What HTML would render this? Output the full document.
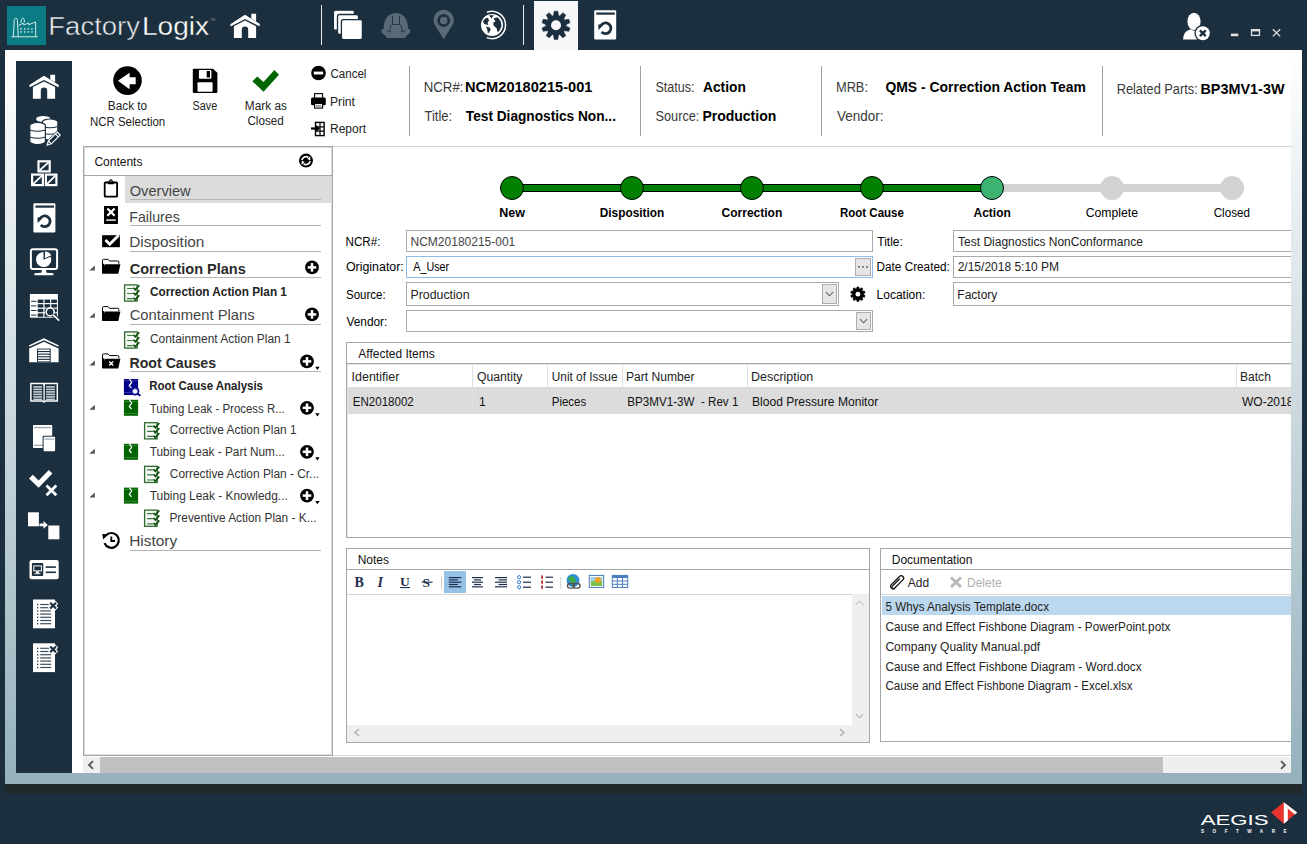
<!DOCTYPE html>
<html><head><meta charset="utf-8"><style>
html,body{margin:0;padding:0;width:1307px;height:844px;overflow:hidden;background:#1b2f3e;}
svg{display:block;font-family:"Liberation Sans", sans-serif;}
</style></head><body>
<svg width="1307" height="844" viewBox="0 0 1307 844">
<defs>
<linearGradient id="gwin" x1="0" y1="0" x2="0" y2="1"><stop offset="0" stop-color="#ffffff"/><stop offset="1" stop-color="#95b1bc"/></linearGradient>
<clipPath id="cmain"><rect x="333" y="147" width="958" height="608"/></clipPath>
<clipPath id="ctree"><rect x="84" y="176" width="248" height="578"/></clipPath>
</defs>
<rect x="0" y="0" width="1307" height="844" fill="#1b2f3e" />
<rect x="5" y="50" width="1297" height="734" fill="url(#gwin)" />
<rect x="5" y="784" width="1297" height="10" fill="#21292c" />
<rect x="72" y="50" width="1219" height="723" fill="#ffffff" />
<rect x="16" y="50" width="56" height="11" fill="#ffffff" />
<rect x="16" y="61" width="56" height="712" fill="#1b2f3e" />
<text x="48.30" y="35.20" font-size="25" fill="#eef0f2" textLength="91.67" lengthAdjust="spacingAndGlyphs" stroke="#1b2f3e" stroke-width="0.5">Factory</text>
<text x="141.95" y="35.20" font-size="25" fill="#ffffff" textLength="67.15" lengthAdjust="spacingAndGlyphs" stroke="#1b2f3e" stroke-width="0.3">Logix</text>
<text x="107.86" y="109.60" font-size="12" fill="#222" textLength="39.31" lengthAdjust="spacingAndGlyphs">Back to</text>
<text x="89.88" y="126.00" font-size="12" fill="#222" textLength="75.35" lengthAdjust="spacingAndGlyphs">NCR Selection</text>
<text x="192.51" y="109.60" font-size="12" fill="#222" textLength="24.71" lengthAdjust="spacingAndGlyphs">Save</text>
<text x="244.85" y="109.60" font-size="12" fill="#222" textLength="42.08" lengthAdjust="spacingAndGlyphs">Mark as</text>
<text x="247.42" y="125.40" font-size="12" fill="#222" textLength="36.32" lengthAdjust="spacingAndGlyphs">Closed</text>
<text x="330.42" y="78.00" font-size="12" fill="#222" textLength="36.01" lengthAdjust="spacingAndGlyphs">Cancel</text>
<text x="330.03" y="105.50" font-size="12" fill="#222" textLength="24.99" lengthAdjust="spacingAndGlyphs">Print</text>
<text x="330.04" y="133.00" font-size="12" fill="#222">Report</text>
<rect x="409" y="66" width="1" height="70" fill="#a0a0a0" />
<rect x="640" y="66" width="1" height="70" fill="#a0a0a0" />
<rect x="821" y="66" width="1" height="70" fill="#a0a0a0" />
<rect x="1102" y="66" width="1" height="70" fill="#a0a0a0" />
<text x="423.74" y="92.10" font-size="14" fill="#3a3a3a" textLength="39.69" lengthAdjust="spacingAndGlyphs">NCR#:</text>
<text x="465.05" y="92.10" font-size="14" fill="#000" font-weight="700" textLength="127.36" lengthAdjust="spacingAndGlyphs">NCM20180215-001</text>
<text x="424.54" y="120.60" font-size="14" fill="#3a3a3a" textLength="27.63" lengthAdjust="spacingAndGlyphs">Title:</text>
<text x="465.86" y="120.60" font-size="14" fill="#000" font-weight="700" textLength="150.07" lengthAdjust="spacingAndGlyphs">Test Diagnostics Non...</text>
<text x="655.44" y="91.80" font-size="14" fill="#3a3a3a" textLength="38.96" lengthAdjust="spacingAndGlyphs">Status:</text>
<text x="702.96" y="91.80" font-size="14" fill="#000" font-weight="700" textLength="42.88" lengthAdjust="spacingAndGlyphs">Action</text>
<text x="655.43" y="120.70" font-size="14" fill="#3a3a3a" textLength="43.98" lengthAdjust="spacingAndGlyphs">Source:</text>
<text x="702.39" y="120.70" font-size="14" fill="#000" font-weight="700">Production</text>
<text x="835.98" y="91.80" font-size="14" fill="#3a3a3a" textLength="31.98" lengthAdjust="spacingAndGlyphs">MRB:</text>
<text x="885.44" y="91.80" font-size="14" fill="#000" font-weight="700" textLength="200.40" lengthAdjust="spacingAndGlyphs">QMS - Correction Action Team</text>
<text x="837.00" y="120.70" font-size="14" fill="#3a3a3a" textLength="46.48" lengthAdjust="spacingAndGlyphs">Vendor:</text>
<text x="1116.68" y="93.60" font-size="14" fill="#3a3a3a" textLength="81.03" lengthAdjust="spacingAndGlyphs">Related Parts:</text>
<text x="1200.46" y="93.60" font-size="14" fill="#000" font-weight="700" textLength="84.03" lengthAdjust="spacingAndGlyphs">BP3MV1-3W</text>
<rect x="84" y="147" width="248" height="1" fill="#dcdcdc" />
<rect x="84" y="754" width="248" height="1" fill="#dcdcdc" />
<rect x="84" y="147" width="1" height="608" fill="#dcdcdc" />
<rect x="331" y="147" width="1" height="608" fill="#dcdcdc" />
<rect x="83" y="146" width="250" height="1" fill="#a6a6a6" />
<rect x="83" y="755" width="250" height="1" fill="#a6a6a6" />
<rect x="83" y="146" width="1" height="610" fill="#a6a6a6" />
<rect x="332" y="146" width="1" height="610" fill="#a6a6a6" />
<rect x="84" y="175" width="248" height="1" fill="#a6a6a6" />
<text x="94.40" y="165.80" font-size="12" fill="#111">Contents</text>
<rect x="125" y="176" width="207" height="27" fill="#dcdcdc" />
<text x="129.74" y="195.80" font-size="15" fill="#454545" textLength="60.92" lengthAdjust="spacingAndGlyphs">Overview</text>
<rect x="130" y="199" width="191" height="1" fill="#b4b4b4" />
<text x="129.26" y="221.60" font-size="15" fill="#454545" textLength="50.56" lengthAdjust="spacingAndGlyphs">Failures</text>
<rect x="130" y="225" width="191" height="1" fill="#b4b4b4" />
<text x="129.17" y="247.40" font-size="15" fill="#454545" textLength="75.27" lengthAdjust="spacingAndGlyphs">Disposition</text>
<rect x="130" y="251" width="191" height="1" fill="#b4b4b4" />
<text x="129.82" y="273.80" font-size="15" fill="#2a2a2a" font-weight="700" textLength="115.92" lengthAdjust="spacingAndGlyphs">Correction Plans</text>
<rect x="130" y="277" width="191" height="1" fill="#b4b4b4" />
<text x="129.66" y="320.00" font-size="15" fill="#454545" textLength="125.05" lengthAdjust="spacingAndGlyphs">Containment Plans</text>
<rect x="130" y="324" width="191" height="1" fill="#b4b4b4" />
<text x="129.48" y="368.00" font-size="15" fill="#2a2a2a" font-weight="700" textLength="86.55" lengthAdjust="spacingAndGlyphs">Root Causes</text>
<rect x="130" y="371" width="191" height="1" fill="#b4b4b4" />
<text x="129.16" y="546.20" font-size="15" fill="#454545" textLength="48.06" lengthAdjust="spacingAndGlyphs">History</text>
<rect x="130" y="550" width="191" height="1" fill="#b4b4b4" />
<text x="150.03" y="295.70" font-size="12" fill="#222" font-weight="700" textLength="136.88" lengthAdjust="spacingAndGlyphs">Correction Action Plan 1</text>
<text x="149.90" y="343.00" font-size="12" fill="#333" textLength="140.84" lengthAdjust="spacingAndGlyphs">Containment Action Plan 1</text>
<text x="149.25" y="389.60" font-size="12" fill="#222" font-weight="700" textLength="113.75" lengthAdjust="spacingAndGlyphs">Root Cause Analysis</text>
<text x="149.77" y="412.50" font-size="12" fill="#333" textLength="135.02" lengthAdjust="spacingAndGlyphs">Tubing Leak - Process R...</text>
<text x="169.81" y="434.00" font-size="12" fill="#333" textLength="126.75" lengthAdjust="spacingAndGlyphs">Corrective Action Plan 1</text>
<text x="149.76" y="455.80" font-size="12" fill="#333" textLength="135.07" lengthAdjust="spacingAndGlyphs">Tubing Leak - Part Num...</text>
<text x="169.81" y="477.50" font-size="12" fill="#333" textLength="149.21" lengthAdjust="spacingAndGlyphs">Corrective Action Plan - Cr...</text>
<text x="149.76" y="499.90" font-size="12" fill="#333" textLength="138.07" lengthAdjust="spacingAndGlyphs">Tubing Leak - Knowledg...</text>
<text x="169.45" y="522.00" font-size="12" fill="#333" textLength="147.16" lengthAdjust="spacingAndGlyphs">Preventive Action Plan - K...</text>
<rect x="333" y="146" width="958" height="1" fill="#d0d0d0" />
<rect x="333" y="755" width="958" height="1" fill="#d4d4d4" />
<rect x="512" y="184" width="480" height="8" fill="#000" />
<rect x="512" y="185" width="480" height="6" fill="#008000" />
<rect x="992" y="184" width="240" height="8" fill="#d3d3d3" />
<circle cx="512" cy="188" r="11.5" fill="#008000" stroke="#000" stroke-width="1"/>
<circle cx="632" cy="188" r="11.5" fill="#008000" stroke="#000" stroke-width="1"/>
<circle cx="752" cy="188" r="11.5" fill="#008000" stroke="#000" stroke-width="1"/>
<circle cx="872" cy="188" r="11.5" fill="#008000" stroke="#000" stroke-width="1"/>
<circle cx="992" cy="188" r="11.5" fill="#3cb371" stroke="#000" stroke-width="1"/>
<circle cx="1112" cy="188" r="12" fill="#d3d3d3"/>
<circle cx="1232" cy="188" r="12" fill="#d3d3d3"/>
<text x="499.19" y="217.00" font-size="12" fill="#000" font-weight="700" textLength="25.66" lengthAdjust="spacingAndGlyphs">New</text>
<text x="599.73" y="217.00" font-size="12" fill="#000" font-weight="700" textLength="64.58" lengthAdjust="spacingAndGlyphs">Disposition</text>
<text x="721.62" y="217.00" font-size="12" fill="#000" font-weight="700">Correction</text>
<text x="839.95" y="217.00" font-size="12" fill="#000" font-weight="700" textLength="64.01" lengthAdjust="spacingAndGlyphs">Root Cause</text>
<text x="973.50" y="217.00" font-size="12" fill="#000" font-weight="700">Action</text>
<text x="1085.69" y="217.00" font-size="12" fill="#000" textLength="52.30" lengthAdjust="spacingAndGlyphs">Complete</text>
<text x="1213.72" y="217.00" font-size="12" fill="#000" textLength="36.21" lengthAdjust="spacingAndGlyphs">Closed</text>
<text x="345.57" y="245.90" font-size="12" fill="#000" textLength="34.93" lengthAdjust="spacingAndGlyphs">NCR#:</text>
<text x="345.94" y="271.00" font-size="12" fill="#000" textLength="57.86" lengthAdjust="spacingAndGlyphs">Originator:</text>
<text x="345.98" y="298.60" font-size="12" fill="#000" textLength="39.71" lengthAdjust="spacingAndGlyphs">Source:</text>
<text x="346.50" y="325.80" font-size="12" fill="#000" textLength="40.84" lengthAdjust="spacingAndGlyphs">Vendor:</text>
<rect x="406" y="230" width="467" height="1" fill="#a9a9a9" />
<rect x="406" y="251" width="467" height="1" fill="#a9a9a9" />
<rect x="406" y="230" width="1" height="22" fill="#a9a9a9" />
<rect x="872" y="230" width="1" height="22" fill="#a9a9a9" />
<rect x="406" y="256" width="467" height="1" fill="#8ebce8" />
<rect x="406" y="277" width="467" height="1" fill="#8ebce8" />
<rect x="406" y="256" width="1" height="22" fill="#8ebce8" />
<rect x="872" y="256" width="1" height="22" fill="#8ebce8" />
<rect x="406" y="282" width="433" height="1" fill="#a9a9a9" />
<rect x="406" y="305" width="433" height="1" fill="#a9a9a9" />
<rect x="406" y="282" width="1" height="24" fill="#a9a9a9" />
<rect x="838" y="282" width="1" height="24" fill="#a9a9a9" />
<rect x="406" y="310" width="467" height="1" fill="#a9a9a9" />
<rect x="406" y="331" width="467" height="1" fill="#a9a9a9" />
<rect x="406" y="310" width="1" height="22" fill="#a9a9a9" />
<rect x="872" y="310" width="1" height="22" fill="#a9a9a9" />
<text x="410.54" y="245.90" font-size="12" fill="#444">NCM20180215-001</text>
<text x="413.30" y="270.60" font-size="12" fill="#000" textLength="35.86" lengthAdjust="spacingAndGlyphs">A_User</text>
<text x="410.51" y="298.60" font-size="12" fill="#222" textLength="59.04" lengthAdjust="spacingAndGlyphs">Production</text>
<text x="877.26" y="245.90" font-size="12" fill="#000">Title:</text>
<text x="876.56" y="271.00" font-size="12" fill="#000" textLength="73.25" lengthAdjust="spacingAndGlyphs">Date Created:</text>
<text x="876.54" y="298.60" font-size="12" fill="#000">Location:</text>
<g clip-path="url(#cmain)">
<rect x="953" y="230" width="400" height="1" fill="#a9a9a9" />
<rect x="953" y="251" width="400" height="1" fill="#a9a9a9" />
<rect x="953" y="230" width="1" height="22" fill="#a9a9a9" />
<rect x="1352" y="230" width="1" height="22" fill="#a9a9a9" />
<rect x="953" y="256" width="400" height="1" fill="#a9a9a9" />
<rect x="953" y="277" width="400" height="1" fill="#a9a9a9" />
<rect x="953" y="256" width="1" height="22" fill="#a9a9a9" />
<rect x="1352" y="256" width="1" height="22" fill="#a9a9a9" />
<rect x="953" y="282" width="400" height="1" fill="#a9a9a9" />
<rect x="953" y="305" width="400" height="1" fill="#a9a9a9" />
<rect x="953" y="282" width="1" height="24" fill="#a9a9a9" />
<rect x="1352" y="282" width="1" height="24" fill="#a9a9a9" />
<text x="958.06" y="245.90" font-size="12" fill="#222">Test Diagnostics NonConformance</text>
<text x="957.70" y="271.00" font-size="12" fill="#222">2/15/2018 5:10 PM</text>
<text x="957.34" y="298.60" font-size="12" fill="#222">Factory</text>
<rect x="346" y="342" width="1000" height="1" fill="#a6a6a6" />
<rect x="346" y="537" width="1000" height="1" fill="#a6a6a6" />
<rect x="346" y="342" width="1" height="196" fill="#a6a6a6" />
<rect x="1345" y="342" width="1" height="196" fill="#a6a6a6" />
<rect x="347" y="363" width="944" height="1" fill="#a6a6a6" />
<rect x="347" y="364" width="944" height="1" fill="#e6e6e6" />
<rect x="347" y="364" width="1" height="173" fill="#e6e6e6" />
<rect x="348" y="387" width="943" height="27" fill="#dcdcdc" />
<rect x="472" y="365" width="1" height="49" fill="#e0e0e0" />
<rect x="547" y="365" width="1" height="49" fill="#e0e0e0" />
<rect x="622" y="365" width="1" height="49" fill="#e0e0e0" />
<rect x="747" y="365" width="1" height="49" fill="#e0e0e0" />
<rect x="1236" y="365" width="1" height="49" fill="#e0e0e0" />
<text x="358.30" y="358.00" font-size="12" fill="#111">Affected Items</text>
<text x="351.58" y="380.60" font-size="12" fill="#222" textLength="47.85" lengthAdjust="spacingAndGlyphs">Identifier</text>
<text x="476.95" y="380.60" font-size="12" fill="#222" textLength="45.54" lengthAdjust="spacingAndGlyphs">Quantity</text>
<text x="551.81" y="380.60" font-size="12" fill="#222" textLength="65.70" lengthAdjust="spacingAndGlyphs">Unit of Issue</text>
<text x="626.03" y="380.60" font-size="12" fill="#222" textLength="68.53" lengthAdjust="spacingAndGlyphs">Part Number</text>
<text x="751.11" y="380.60" font-size="12" fill="#222" textLength="62.17" lengthAdjust="spacingAndGlyphs">Description</text>
<text x="1240.04" y="380.60" font-size="12" fill="#222" textLength="30.81" lengthAdjust="spacingAndGlyphs">Batch</text>
<text x="352.78" y="406.00" font-size="12" fill="#111" textLength="60.97" lengthAdjust="spacingAndGlyphs">EN2018002</text>
<text x="479.10" y="406.00" font-size="12" fill="#111">1</text>
<text x="551.78" y="406.00" font-size="12" fill="#111" textLength="34.44" lengthAdjust="spacingAndGlyphs">Pieces</text>
<text x="627.27" y="406.00" font-size="12" fill="#111" textLength="111.09" lengthAdjust="spacingAndGlyphs">BP3MV1-3W  - Rev 1</text>
<text x="752.03" y="406.00" font-size="12" fill="#111" textLength="126.14" lengthAdjust="spacingAndGlyphs">Blood Pressure Monitor</text>
<text x="1242.00" y="406.00" font-size="12" fill="#111">WO-2018002</text>
<rect x="880" y="548" width="500" height="1" fill="#a6a6a6" />
<rect x="880" y="741" width="500" height="1" fill="#a6a6a6" />
<rect x="880" y="548" width="1" height="194" fill="#a6a6a6" />
<rect x="1379" y="548" width="1" height="194" fill="#a6a6a6" />
<rect x="881" y="569" width="410" height="1" fill="#a6a6a6" />
<rect x="881" y="594" width="410" height="1" fill="#d6d6d6" />
<rect x="882" y="596" width="409" height="19" fill="#bcd8ee" />
<text x="891.74" y="564.00" font-size="12" fill="#111">Documentation</text>
<text x="907.80" y="586.80" font-size="12" fill="#222">Add</text>
<text x="967.04" y="586.80" font-size="12" fill="#b0b0b0">Delete</text>
<text x="885.53" y="611.00" font-size="12" fill="#222" textLength="163.46" lengthAdjust="spacingAndGlyphs">5 Whys Analysis Template.docx</text>
<text x="885.41" y="631.00" font-size="12" fill="#222" textLength="284.88" lengthAdjust="spacingAndGlyphs">Cause and Effect Fishbone Diagram - PowerPoint.potx</text>
<text x="885.40" y="651.00" font-size="12" fill="#222">Company Quality Manual.pdf</text>
<text x="885.41" y="671.00" font-size="12" fill="#222" textLength="256.23" lengthAdjust="spacingAndGlyphs">Cause and Effect Fishbone Diagram - Word.docx</text>
<text x="885.42" y="690.00" font-size="12" fill="#222" textLength="247.20" lengthAdjust="spacingAndGlyphs">Cause and Effect Fishbone Diagram - Excel.xlsx</text>
</g>
<rect x="346" y="548" width="524" height="1" fill="#a6a6a6" />
<rect x="346" y="742" width="524" height="1" fill="#a6a6a6" />
<rect x="346" y="548" width="1" height="195" fill="#a6a6a6" />
<rect x="869" y="548" width="1" height="195" fill="#a6a6a6" />
<rect x="347" y="569" width="522" height="1" fill="#a6a6a6" />
<rect x="347" y="594" width="522" height="1" fill="#d6d6d6" />
<text x="357.64" y="563.50" font-size="12" fill="#111">Notes</text>
<rect x="852" y="594" width="17" height="131" fill="#efefef" />
<rect x="347" y="725" width="522" height="17" fill="#efefef" />
<rect x="444" y="571" width="22" height="22" fill="#9cc6e6" />
<rect x="83" y="757" width="1208" height="16" fill="#efefef" />
<rect x="100" y="757" width="1063" height="16" fill="#c0c0c0" />
<rect x="7" y="6" width="39" height="39" fill="#0b7c83"/>
<g fill="none" stroke="#e6f2f2" stroke-width="0.9">
<path d="M13.3,36.8 L14.3,19.3 Q15.8,16.3 17.3,19.3 L18.3,36.8"/>
<path d="M21,23.2 L21.4,19.3 Q22.8,16.6 24.2,19.3 L24.5,22.4"/>
<path d="M18.5,25.4 L23.5,23.2 L23.8,25 L28.5,23 L28.7,24.7 L35.6,22 L35.7,36.8"/>
<path d="M11.3,36.8 L37.7,36.8"/>
</g>
<g fill="#e6f2f2">
<rect x="20.3" y="28.3" width="1.5" height="1.3"/><rect x="24" y="28.3" width="1.5" height="1.3"/><rect x="27.6" y="28.3" width="1.5" height="1.3"/><rect x="31.2" y="28.3" width="1.5" height="1.3"/>
<rect x="20.3" y="31.3" width="1.5" height="1.3"/><rect x="24" y="31.3" width="1.5" height="1.3"/><rect x="27.6" y="31.3" width="1.5" height="1.3"/><rect x="31.2" y="31.3" width="1.5" height="1.3"/>
</g>
<g transform="translate(230.3,13.8)" fill="#ffffff">
<path d="M14.7,1 L29.6,10.2 L29.2,12.5 L14.7,5.2 L0.4,12.6 L0,10.4 Z"/>
<path d="M21,0 L25.8,0 L25.8,7.6 L21,4.7 Z"/>
<path d="M14.7,6.8 L25.8,12.4 L25.8,24.1 L17.9,24.1 L17.9,16 A3.2,3.2 0 0 0 11.5,16 L11.5,24.1 L3.6,24.1 L3.6,12.4 Z"/>
</g>
<rect x="321" y="5" width="1" height="40" fill="#e8ecee" />
<rect x="523" y="5" width="1" height="40" fill="#e8ecee" />
<g transform="translate(333.4,10.2)"><rect x="0" y="0" width="21" height="20" rx="2" fill="#fff" stroke="#1b2f3e" stroke-width="1.3"/><rect x="4.1" y="4.3" width="21" height="20" rx="2" fill="#fff" stroke="#1b2f3e" stroke-width="1.3"/><rect x="8" y="9.4" width="21" height="20" rx="2" fill="#fff" stroke="#1b2f3e" stroke-width="1.3"/></g>
<g transform="translate(381.4,12.9)">
<path d="M2.4,15.6 C2.4,4.5 8,0 14.5,0 C21,0 26.6,4.5 26.6,15.6 L28.8,16.6 L29,19.6 L26,21.8 L23.6,25.1 L5.6,25.1 L3.2,21.8 L0,19.6 L0.2,16.6 Z" fill="#586a76"/>
<path d="M11.1,3 L11.1,11.6 L18.1,11.6 L18.1,3 M9.8,11.8 Q8.6,15 8.6,19.2 Q6.4,18.8 5.4,16.6 M19.4,11.8 Q20.6,15 20.6,19.2 Q22.8,18.8 23.8,16.6" fill="none" stroke="#1b2f3e" stroke-width="0.9"/>
</g>
<g transform="translate(443.7,20.5)">
<path d="M0,18.7 L-8.2,5.6 A10.2,10.2 0 1 1 8.2,5.6 Z" fill="#586a76"/>
<circle cx="0" cy="0" r="6.4" fill="#1b2f3e"/>
<circle cx="0" cy="0" r="3.8" fill="#586a76"/>
</g>
<g transform="translate(492,25)">
<circle r="11" fill="#fff"/>
<path d="M-5.2,-12.6 A13.6,13.6 0 1 1 -5.2,12.6" fill="none" stroke="#fff" stroke-width="1.5"/>
<path d="M-3,-9.8 L1.8,-9.8 L-0.6,-6.6 Z" fill="#1b2f3e"/>
<path d="M-8.6,-4.6 Q-6.5,-7.6 -4,-7.2 L-3,-4.6 L-4.4,-2 L-3.6,0 L-6.2,-0.6 Q-9.6,-2 -8.6,-4.6 Z" fill="#1b2f3e"/>
<path d="M-6,1.4 L-2.4,2.4 L-1.2,4.6 L-3,7.6 L-4.2,8.6 L-4.6,5 Z" fill="#1b2f3e"/>
<path d="M1.6,-6.8 L5.6,-7.8 L8.6,-4 L9.6,1 L7.6,5.6 L5.6,7.2 L4.6,3.2 L1.6,0.6 L1.2,-2.2 L3.4,-3.4 Z" fill="#1b2f3e"/>
</g>
<rect x="534" y="1" width="44" height="49" fill="#f7f7fa" />
<circle cx="556" cy="25.3" r="10" fill="#1b2f3e"/><path d="M558.49,15.62 L557.80,11.21 L554.20,11.21 L553.51,15.62 L552.33,16.00 L549.17,12.85 L546.27,14.96 L548.29,18.93 L547.56,19.94 L543.16,19.24 L542.05,22.65 L546.02,24.68 L546.02,25.92 L542.05,27.95 L543.16,31.36 L547.56,30.66 L548.29,31.67 L546.27,35.64 L549.17,37.75 L552.33,34.60 L553.51,34.98 L554.20,39.39 L557.80,39.39 L558.49,34.98 L559.67,34.60 L562.83,37.75 L565.73,35.64 L563.71,31.67 L564.44,30.66 L568.84,31.36 L569.95,27.95 L565.98,25.92 L565.98,24.68 L569.95,22.65 L568.84,19.24 L564.44,19.94 L563.71,18.93 L565.73,14.96 L562.83,12.85 L559.67,16.00 Z" fill="#1b2f3e" stroke="#1b2f3e" stroke-width="0.6" stroke-linejoin="round"/><circle cx="556" cy="25.3" r="5" fill="#f7f7fa"/>
<g transform="translate(594.2,10.2)">
<rect x="0" y="0" width="22" height="29.2" rx="1.2" fill="#ffffff"/>
<rect x="2" y="2.3" width="18.6" height="2.2" fill="#1b2f3e"/>
<path d="M6.6,15.4 A5.4,5.4 0 1 1 7.4,21.8" fill="none" stroke="#1b2f3e" stroke-width="2.8"/>
<path d="M4,14.2 L9.6,14.4 L4.4,19.8 Z" fill="#1b2f3e"/>
</g>
<g transform="translate(1183,12.7)">
<ellipse cx="11" cy="8.7" rx="6.6" ry="8.6" fill="#fff"/>
<path d="M0,26.8 Q0.5,19.5 5.2,17.6 L7.8,16.6 Q11,19.5 14.2,16.6 L16.8,17.6 Q21.5,19.5 22,26.8 Z" fill="#fff"/>
<circle cx="19.8" cy="20.6" r="8.4" fill="#1b2f3e"/>
<circle cx="19.8" cy="20.6" r="7" fill="#fff"/>
<circle cx="19.8" cy="20.6" r="5.6" fill="#fff"/>
<path d="M16.9,17.7 L22.7,23.5 M22.7,17.7 L16.9,23.5" stroke="#1b2f3e" stroke-width="2.4"/>
</g>
<rect x="1230.9" y="33.6" width="7.4" height="2.6" fill="#e0e0e0" />
<rect x="1251.5" y="29.8" width="8" height="5.6" fill="none" stroke="#e0e0e0" stroke-width="1.3"/><rect x="1251" y="29" width="9" height="2.4" fill="#e0e0e0"/>
<path d="M1272.8,29.2 L1280.2,36.4 M1280.2,29.2 L1272.8,36.4" stroke="#e0e0e0" stroke-width="1.3"/>
<g transform="translate(29.3,74.7)" fill="#ffffff">
<path d="M14.7,1 L29.6,10.2 L29.2,12.5 L14.7,5.2 L0.4,12.6 L0,10.4 Z"/>
<path d="M21,0 L25.8,0 L25.8,7.6 L21,4.7 Z"/>
<path d="M14.7,6.8 L25.8,12.4 L25.8,24.1 L17.9,24.1 L17.9,16 A3.2,3.2 0 0 0 11.5,16 L11.5,24.1 L3.6,24.1 L3.6,12.4 Z"/>
</g>
<g transform="translate(29.8,116)"><rect x="6.5" y="0" width="14" height="6" rx="7" ry="2.5" fill="#fff"/><rect x="12.5" y="3" width="15.6" height="21" rx="7.8" ry="3" fill="#fff" stroke="#1b2f3e" stroke-width="1.2"/><path d="M12.5,10.5 Q20.3,13 28.1,10.5 M12.5,17 Q20.3,19.5 28.1,17" stroke="#1b2f3e" stroke-width="1.2" fill="none"/><rect x="0" y="6.5" width="15.6" height="22" rx="7.8" ry="3" fill="#fff" stroke="#1b2f3e" stroke-width="1.2"/><path d="M0,14 Q7.8,16.5 15.6,14 M0,21 Q7.8,23.5 15.6,21" stroke="#1b2f3e" stroke-width="1.2" fill="none"/><path d="M16.2,30.4 L17.6,24.4 L27.4,14.6 L31.8,19 L22,28.8 Z" fill="#1b2f3e"/><path d="M17.4,29.2 L18.6,24.8 L27.4,16 L30.4,19 L21.6,27.8 Z M25.6,17.8 L28.6,20.8 M18.6,24.8 L21.6,27.8" fill="none" stroke="#fff" stroke-width="1.2"/></g>
<g transform="translate(31,160)">
<rect x="7.5" y="1.3" width="11.2" height="10.1" fill="none" stroke="#fff" stroke-width="2.2"/>
<path d="M8.6,10.4 L17.6,2.3" stroke="#fff" stroke-width="1.8"/>
<rect x="1.1" y="14.6" width="10.8" height="10.5" fill="none" stroke="#fff" stroke-width="2.2"/>
<rect x="14.9" y="14.6" width="10.5" height="10.5" fill="none" stroke="#fff" stroke-width="2.2"/>
<path d="M2.1,24.1 L10.9,15.6 M15.9,24.1 L24.4,15.6" stroke="#fff" stroke-width="1.8"/>
</g>
<g transform="translate(33.4,203.2)">
<rect x="0" y="0" width="22" height="29.2" rx="1.2" fill="#ffffff"/>
<rect x="2" y="2.3" width="18.6" height="2.2" fill="#1b2f3e"/>
<path d="M6.6,15.4 A5.4,5.4 0 1 1 7.4,21.8" fill="none" stroke="#1b2f3e" stroke-width="2.8"/>
<path d="M4,14.2 L9.6,14.4 L4.4,19.8 Z" fill="#1b2f3e"/>
</g>
<g transform="translate(29.9,248.3)">
<rect x="1" y="1" width="26.2" height="19.6" rx="2" fill="none" stroke="#fff" stroke-width="2"/>
<path d="M12,21 L16,21 L16.5,24.5 L23.5,25 L23.5,27 L4.5,27 L4.5,25 L11.5,24.5 Z" fill="#fff"/>
<path d="M13.6,11.4 L13.6,3.6 A7.6,7.6 0 1 0 20.8,8.4 Z" fill="#fff"/>
<path d="M15,10 L15.2,3.2 A7.2,7.2 0 0 1 21.4,7 Z" fill="#fff"/>
</g>
<g transform="translate(29.9,294)"><rect x="0" y="0" width="28" height="23.7" fill="#fff"/><rect x="7.8" y="5.6" width="5.6" height="3.4" fill="#1b2f3e"/><rect x="14.6" y="5.6" width="5.6" height="3.4" fill="#1b2f3e"/><rect x="21.4" y="5.6" width="5.6" height="3.4" fill="#1b2f3e"/><rect x="7.8" y="10.2" width="5.6" height="3.4" fill="#1b2f3e"/><rect x="14.6" y="10.2" width="5.6" height="3.4" fill="#1b2f3e"/><rect x="21.4" y="10.2" width="5.6" height="3.4" fill="#1b2f3e"/><rect x="7.8" y="14.8" width="5.6" height="3.4" fill="#1b2f3e"/><rect x="14.6" y="14.8" width="5.6" height="3.4" fill="#1b2f3e"/><rect x="21.4" y="14.8" width="5.6" height="3.4" fill="#1b2f3e"/><rect x="7.8" y="19.4" width="5.6" height="3.4" fill="#1b2f3e"/><rect x="14.6" y="19.4" width="5.6" height="3.4" fill="#1b2f3e"/><rect x="21.4" y="19.4" width="5.6" height="3.4" fill="#1b2f3e"/><rect x="1.2" y="6.8" width="5.4" height="1" fill="#1b2f3e"/><rect x="1.2" y="11.4" width="5.4" height="1" fill="#1b2f3e"/><rect x="1.2" y="16.0" width="5.4" height="1" fill="#1b2f3e"/><rect x="1.2" y="20.6" width="5.4" height="1" fill="#1b2f3e"/><circle cx="20.3" cy="17.9" r="5.2" fill="#1b2f3e"/><circle cx="20.3" cy="17.9" r="4" fill="none" stroke="#fff" stroke-width="1.6"/><path d="M23.2,20.8 L29.3,26.6" stroke="#1b2f3e" stroke-width="3.6"/><path d="M23.2,20.8 L29.3,26.6" stroke="#fff" stroke-width="1.8"/></g>
<g transform="translate(29.2,338.2)"><path d="M14.7,0 L29.4,7 L29.4,8.6 L14.7,2 L0,8.6 L0,7 Z" fill="#fff"/><path d="M14.7,3.6 L29.4,10.2 L29.4,24 L0,24 L0,10.2 Z" fill="#fff"/><rect x="7.8" y="10.4" width="13.7" height="13.6" fill="#1b2f3e"/><rect x="8.8" y="11.3" width="11.7" height="1.5" fill="#fff"/><rect x="8.8" y="13.9" width="11.7" height="1.5" fill="#fff"/><rect x="8.8" y="16.5" width="11.7" height="1.5" fill="#fff"/><rect x="8.8" y="19.1" width="11.7" height="1.5" fill="#fff"/><rect x="8.8" y="21.7" width="11.7" height="1.5" fill="#fff"/></g>
<g transform="translate(30.1,382.7)"><path d="M0.8,0.8 L13.5,0.8 L14,2 L14.5,0.8 L27.2,0.8 L27.2,18.3 L15.5,18.3 L14,19.3 L12.5,18.3 L0.8,18.3 Z" fill="#1b2f3e" stroke="#fff" stroke-width="1.5"/><path d="M14,1.5 L14,18.5" stroke="#fff" stroke-width="1.3"/><rect x="3.2" y="3.4" width="8.8" height="1.6" fill="#c9d0d5"/><rect x="16" y="3.4" width="8.8" height="1.6" fill="#c9d0d5"/><rect x="3.2" y="5.9" width="8.8" height="1.6" fill="#c9d0d5"/><rect x="16" y="5.9" width="8.8" height="1.6" fill="#c9d0d5"/><rect x="3.2" y="8.4" width="8.8" height="1.6" fill="#c9d0d5"/><rect x="16" y="8.4" width="8.8" height="1.6" fill="#c9d0d5"/><rect x="3.2" y="10.9" width="8.8" height="1.6" fill="#c9d0d5"/><rect x="16" y="10.9" width="8.8" height="1.6" fill="#c9d0d5"/><rect x="3.2" y="13.4" width="8.8" height="1.6" fill="#c9d0d5"/><rect x="16" y="13.4" width="8.8" height="1.6" fill="#c9d0d5"/><rect x="3.2" y="15.9" width="8.8" height="1.6" fill="#c9d0d5"/><rect x="16" y="15.9" width="8.8" height="1.6" fill="#c9d0d5"/></g>
<g transform="translate(33,424.9)">
<rect x="0" y="0" width="19.2" height="23.2" rx="0.8" fill="#fff"/>
<rect x="1" y="2" width="17.2" height="1.3" fill="#9aa7b0"/>
<rect x="1" y="19.8" width="17.2" height="1.3" fill="#9aa7b0"/>
<rect x="9.6" y="10.8" width="13.2" height="16.2" rx="1" fill="#1b2f3e"/>
<rect x="10.6" y="11.8" width="11.5" height="14.6" rx="0.8" fill="#fff"/>
<rect x="11.2" y="13.6" width="10.3" height="1.2" fill="#9aa7b0"/>
</g>
<g transform="translate(29,468.5)">
<path d="M0,10 L3.8,6.3 L9.6,12 L19.8,1.5 L23.4,5 L9.6,19.2 Z" fill="#fff"/>
<path d="M17.5,17 L27.3,26.8 M27.3,17 L17.5,26.8" stroke="#fff" stroke-width="2.8"/>
</g>
<g transform="translate(28,512)">
<rect x="0" y="0.3" width="10.9" height="14" fill="#fff"/>
<rect x="20.3" y="13.5" width="11.1" height="13.8" fill="#fff"/>
<path d="M11.5,11.6 L15.5,11.6 L15.5,9 L19.8,12.9 L15.5,16.8 L15.5,14.2 L11.5,14.2 Z" fill="#fff"/>
</g>
<g transform="translate(29.5,559.9)">
<rect x="0" y="0" width="29.2" height="19.4" rx="2" fill="#fff"/>
<rect x="2.4" y="3" width="11.3" height="13" rx="1" fill="#1b2f3e"/>
<rect x="4.3" y="6" width="7.6" height="5" fill="none" stroke="#fff" stroke-width="1"/>
<rect x="6.5" y="11.4" width="3" height="1.6" fill="#fff"/>
<rect x="5" y="13.3" width="6" height="1" fill="#fff"/>
<rect x="16.2" y="6.4" width="10.2" height="1.6" fill="#1b2f3e"/>
<rect x="16.2" y="11.6" width="10.2" height="1.6" fill="#1b2f3e"/>
</g>
<g transform="translate(33,599.5)"><rect x="0" y="0" width="22" height="28.8" fill="#fff"/><rect x="4" y="4.4" width="1.3" height="1.3" fill="#1b2f3e"/><rect x="7.2" y="4.4" width="11" height="1.2" fill="#3d4f5c"/><rect x="4" y="7.6" width="1.3" height="1.3" fill="#1b2f3e"/><rect x="7.2" y="7.6" width="11" height="1.2" fill="#3d4f5c"/><rect x="4" y="10.8" width="1.3" height="1.3" fill="#1b2f3e"/><rect x="7.2" y="10.8" width="11" height="1.2" fill="#3d4f5c"/><rect x="4" y="14.0" width="1.3" height="1.3" fill="#1b2f3e"/><rect x="7.2" y="14.0" width="11" height="1.2" fill="#3d4f5c"/><rect x="4" y="17.2" width="1.3" height="1.3" fill="#1b2f3e"/><rect x="7.2" y="17.2" width="11" height="1.2" fill="#3d4f5c"/><rect x="4" y="20.4" width="1.3" height="1.3" fill="#1b2f3e"/><rect x="7.2" y="20.4" width="11" height="1.2" fill="#3d4f5c"/><rect x="4" y="23.6" width="1.3" height="1.3" fill="#1b2f3e"/><rect x="7.2" y="23.6" width="11" height="1.2" fill="#3d4f5c"/><path d="M16.6,2.6 L23.6,9.6 M23.6,2.6 L16.6,9.6" stroke="#fff" stroke-width="4.6"/><path d="M17.2,3.2 L23,9 M23,3.2 L17.2,9" stroke="#1b2f3e" stroke-width="2.2"/></g>
<g transform="translate(33,643.3)"><rect x="0" y="0" width="22" height="28.8" fill="#fff"/><rect x="4" y="4.4" width="1.3" height="1.3" fill="#1b2f3e"/><rect x="7.2" y="4.4" width="11" height="1.2" fill="#3d4f5c"/><rect x="4" y="7.6" width="1.3" height="1.3" fill="#1b2f3e"/><rect x="7.2" y="7.6" width="11" height="1.2" fill="#3d4f5c"/><rect x="4" y="10.8" width="1.3" height="1.3" fill="#1b2f3e"/><rect x="7.2" y="10.8" width="11" height="1.2" fill="#3d4f5c"/><rect x="4" y="14.0" width="1.3" height="1.3" fill="#1b2f3e"/><rect x="7.2" y="14.0" width="11" height="1.2" fill="#3d4f5c"/><rect x="4" y="17.2" width="1.3" height="1.3" fill="#1b2f3e"/><rect x="7.2" y="17.2" width="11" height="1.2" fill="#3d4f5c"/><rect x="4" y="20.4" width="1.3" height="1.3" fill="#1b2f3e"/><rect x="7.2" y="20.4" width="11" height="1.2" fill="#3d4f5c"/><rect x="4" y="23.6" width="1.3" height="1.3" fill="#1b2f3e"/><rect x="7.2" y="23.6" width="11" height="1.2" fill="#3d4f5c"/><path d="M16.6,2.6 L23.6,9.6 M23.6,2.6 L16.6,9.6" stroke="#fff" stroke-width="4.6"/><path d="M17.2,3.2 L23,9 M23,3.2 L17.2,9" stroke="#1b2f3e" stroke-width="2.2"/></g>
<circle cx="127.5" cy="80.6" r="14.3" fill="#000"/>
<path d="M117.9,80.8 L129.6,72.8 L129.6,77.3 L135.7,77.3 L135.7,84.3 L129.6,84.3 L129.6,89.3 Z" fill="#fff"/>
<path d="M193.8,68.8 L213,68.8 L217.4,72.8 L217.4,92 Q217.4,93 216.4,93 L193.8,93 Q192.8,93 192.8,92 L192.8,69.8 Q192.8,68.8 193.8,68.8 Z" fill="#000"/>
<rect x="198.9" y="70" width="12.5" height="8.7" rx="1" fill="#fff"/>
<rect x="206.7" y="71" width="3.3" height="6.5" fill="#000"/>
<rect x="197.5" y="82.3" width="15.1" height="9.5" rx="1" fill="#fff"/>
<path d="M252.4,81.3 L257.3,76.4 L263.5,81.9 L274.4,70 L279,74.7 L263.5,91.8 Z" fill="#006400"/>
<circle cx="318.5" cy="73" r="7.3" fill="#000"/>
<rect x="313.8" y="71.6" width="9.4" height="2.9" fill="#fff"/>
<rect x="314.6" y="93.6" width="8" height="5" fill="#fff" stroke="#000" stroke-width="1.1"/>
<rect x="311" y="97.5" width="14.8" height="7.8" rx="1.5" fill="#000"/>
<rect x="314.6" y="103.5" width="8" height="4.6" fill="#fff" stroke="#000" stroke-width="1.1"/>
<rect x="316" y="105.2" width="5.2" height="1.6" fill="#888"/>
<rect x="315.5" y="122.4" width="8.6" height="13.2" fill="#fff" stroke="#000" stroke-width="1.4"/>
<path d="M320,122.4 L320,135.6 M315.5,126.8 L324.1,126.8 M315.5,131.2 L324.1,131.2" stroke="#000" stroke-width="1.2"/>
<path d="M311,128.5 L317,128.5" stroke="#000" stroke-width="2.2"/>
<path d="M316,125 L320,128.5 L316,132 Z" fill="#000"/>
<g transform="translate(306,160.6)">
<circle r="7" fill="#000"/>
<path d="M-4.1,-0.5 A4.3,4.3 0 0 1 2.4,-3.4" fill="none" stroke="#fff" stroke-width="1.7"/>
<path d="M1.2,-1.5 L4.4,-4.4 L4.3,-0.2 Z" fill="#fff"/>
<g transform="rotate(180)">
<path d="M-4.1,-0.5 A4.3,4.3 0 0 1 2.4,-3.4" fill="none" stroke="#fff" stroke-width="1.7"/>
<path d="M1.2,-1.5 L4.4,-4.4 L4.3,-0.2 Z" fill="#fff"/>
</g>
</g>
<g transform="translate(103.8,179.6)">
<rect x="0.9" y="2.9" width="12.4" height="14.2" rx="0.8" fill="none" stroke="#000" stroke-width="1.8"/>
<path d="M3.6,2 L10.6,2 L10,4.6 L4.2,4.6 Z" fill="#000"/>
<circle cx="7.1" cy="1.4" r="1.8" fill="#000"/>
<circle cx="7.1" cy="1.5" r="0.6" fill="#fff"/>
</g>
<g transform="translate(104,206.1)">
<rect x="0" y="0" width="14" height="17.8" rx="0.6" fill="#000"/>
<path d="M3.4,2.4 L10.6,9.6 M10.6,2.4 L3.4,9.6" stroke="#fff" stroke-width="2.2"/>
<rect x="2.2" y="13.3" width="9.6" height="1.4" fill="#fff"/>
</g>
<g transform="translate(102.1,234.6)">
<rect x="0" y="0.6" width="17.8" height="12" fill="#000"/>
<path d="M3.4,5.4 L7.6,9.6 L16.6,0.6" fill="none" stroke="#fff" stroke-width="2.8"/>
</g>
<path d="M89.30000000000001,270.5 L94.9,265.5 L94.9,270.5 Z" fill="#555555"/>
<g transform="translate(102,258.8)">
<path d="M0.5,14.5 L0.5,1.6 Q0.5,0.5 1.6,0.5 L6,0.5 L7.5,2.2 L15.8,2.2 Q16.8,2.2 16.8,3.2 L16.8,5" fill="none" stroke="#000" stroke-width="1"/>
<path d="M2.6,5.4 L18.4,5.4 L16.3,15 L0.4,15 L0.4,14 Z" fill="#000"/>
<path d="M1.3,5 L1.3,14" stroke="#000" stroke-width="1.5"/></g>
<circle cx="312" cy="267.4" r="6.9" fill="#000"/>
<rect x="310.75" y="263.09999999999997" width="2.5" height="8.6" fill="#fff"/>
<rect x="307.7" y="266.15" width="8.6" height="2.5" fill="#fff"/>
<g transform="translate(123.9,284.2)">
<rect x="0.7" y="0.7" width="12.6" height="16.2" fill="#f4f7f4" stroke="#2f6a2f" stroke-width="1.3"/>
<path d="M3.2,4.3 L9,4.3 M3.2,9.3 L9,9.3 M3.2,14.4 L9,14.4" stroke="#3a7a3a" stroke-width="1.2"/>
<path d="M9.6,3.6 L11.4,5.6 L15.4,1 M9.6,8.6 L11.4,10.6 L15.4,6 M9.6,13.6 L11.4,15.6 L15.4,11" fill="none" stroke="#0c4d0c" stroke-width="1.7"/>
</g>
<path d="M89.30000000000001,317.8 L94.9,312.8 L94.9,317.8 Z" fill="#555555"/>
<g transform="translate(102,306.1)">
<path d="M0.5,14.5 L0.5,1.6 Q0.5,0.5 1.6,0.5 L6,0.5 L7.5,2.2 L15.8,2.2 Q16.8,2.2 16.8,3.2 L16.8,5" fill="none" stroke="#000" stroke-width="1"/>
<path d="M2.6,5.4 L18.4,5.4 L16.3,15 L0.4,15 L0.4,14 Z" fill="#000"/>
<path d="M1.3,5 L1.3,14" stroke="#000" stroke-width="1.5"/></g>
<circle cx="312" cy="314.4" r="6.9" fill="#000"/>
<rect x="310.75" y="310.09999999999997" width="2.5" height="8.6" fill="#fff"/>
<rect x="307.7" y="313.15" width="8.6" height="2.5" fill="#fff"/>
<g transform="translate(123.9,331.2)">
<rect x="0.7" y="0.7" width="12.6" height="16.2" fill="#f4f7f4" stroke="#2f6a2f" stroke-width="1.3"/>
<path d="M3.2,4.3 L9,4.3 M3.2,9.3 L9,9.3 M3.2,14.4 L9,14.4" stroke="#3a7a3a" stroke-width="1.2"/>
<path d="M9.6,3.6 L11.4,5.6 L15.4,1 M9.6,8.6 L11.4,10.6 L15.4,6 M9.6,13.6 L11.4,15.6 L15.4,11" fill="none" stroke="#0c4d0c" stroke-width="1.7"/>
</g>
<path d="M89.30000000000001,365.5 L94.9,360.5 L94.9,365.5 Z" fill="#555555"/>
<g transform="translate(102,353.4)">
<path d="M0.5,14.5 L0.5,1.6 Q0.5,0.5 1.6,0.5 L6,0.5 L7.5,2.2 L15.8,2.2 Q16.8,2.2 16.8,3.2 L16.8,5" fill="none" stroke="#000" stroke-width="1"/>
<path d="M2.6,5.4 L18.4,5.4 L16.3,15 L0.4,15 L0.4,14 Z" fill="#000"/>
<path d="M1.3,5 L1.3,14" stroke="#000" stroke-width="1.5"/><path d="M7.2,8 L11.2,12 M11.2,8 L7.2,12" stroke="#fff" stroke-width="1.4"/></g>
<circle cx="307" cy="361.4" r="6.9" fill="#000"/>
<rect x="305.75" y="357.09999999999997" width="2.5" height="8.6" fill="#fff"/>
<rect x="302.7" y="360.15" width="8.6" height="2.5" fill="#fff"/><path d="M315.2,366.79999999999995 L319.6,366.79999999999995 L317.4,370.0 Z" fill="#000"/>
<g transform="translate(123.9,379)">
<rect x="0" y="0" width="14.2" height="16" fill="#00008b"/>
<rect x="0" y="1.3" width="14.2" height="0.8" fill="#ffffff" opacity="0.25"/>
<rect x="0" y="13.2" width="14.2" height="0.8" fill="#ffffff" opacity="0.25"/>
<path d="M5.6,0 L7.8,3.4 L5.4,6.6 L7.6,9.2" fill="none" stroke="#fff" stroke-width="1.2"/>
<circle cx="11.2" cy="12.3" r="4.2" fill="#00008b"/>
<circle cx="11.2" cy="12.3" r="2.6" fill="#fff" stroke="#6060c0" stroke-width="0.8"/>
<path d="M13.4,14.5 L16.5,16.8" stroke="#00008b" stroke-width="2"/>
</g>
<path d="M89.30000000000001,409.8 L94.9,404.8 L94.9,409.8 Z" fill="#555555"/>
<g transform="translate(123.9,399.8)">
<rect x="0" y="0" width="14.2" height="16" fill="#006400"/>
<rect x="0" y="1.3" width="14.2" height="0.8" fill="#ffffff" opacity="0.25"/>
<rect x="0" y="13.2" width="14.2" height="0.8" fill="#ffffff" opacity="0.25"/>
<path d="M5.6,0 L7.8,3.4 L5.4,6.6 L7.6,9.2" fill="none" stroke="#fff" stroke-width="1.2"/>
</g>
<circle cx="307" cy="407.8" r="6.9" fill="#000"/>
<rect x="305.75" y="403.5" width="2.5" height="8.6" fill="#fff"/>
<rect x="302.7" y="406.55" width="8.6" height="2.5" fill="#fff"/><path d="M315.2,413.2 L319.6,413.2 L317.4,416.40000000000003 Z" fill="#000"/>
<path d="M89.30000000000001,453.8 L94.9,448.8 L94.9,453.8 Z" fill="#555555"/>
<g transform="translate(123.9,443.8)">
<rect x="0" y="0" width="14.2" height="16" fill="#006400"/>
<rect x="0" y="1.3" width="14.2" height="0.8" fill="#ffffff" opacity="0.25"/>
<rect x="0" y="13.2" width="14.2" height="0.8" fill="#ffffff" opacity="0.25"/>
<path d="M5.6,0 L7.8,3.4 L5.4,6.6 L7.6,9.2" fill="none" stroke="#fff" stroke-width="1.2"/>
</g>
<circle cx="307" cy="451.8" r="6.9" fill="#000"/>
<rect x="305.75" y="447.5" width="2.5" height="8.6" fill="#fff"/>
<rect x="302.7" y="450.55" width="8.6" height="2.5" fill="#fff"/><path d="M315.2,457.2 L319.6,457.2 L317.4,460.40000000000003 Z" fill="#000"/>
<path d="M89.30000000000001,497.6 L94.9,492.6 L94.9,497.6 Z" fill="#555555"/>
<g transform="translate(123.9,487.6)">
<rect x="0" y="0" width="14.2" height="16" fill="#006400"/>
<rect x="0" y="1.3" width="14.2" height="0.8" fill="#ffffff" opacity="0.25"/>
<rect x="0" y="13.2" width="14.2" height="0.8" fill="#ffffff" opacity="0.25"/>
<path d="M5.6,0 L7.8,3.4 L5.4,6.6 L7.6,9.2" fill="none" stroke="#fff" stroke-width="1.2"/>
</g>
<circle cx="307" cy="495.6" r="6.9" fill="#000"/>
<rect x="305.75" y="491.3" width="2.5" height="8.6" fill="#fff"/>
<rect x="302.7" y="494.35" width="8.6" height="2.5" fill="#fff"/><path d="M315.2,501.0 L319.6,501.0 L317.4,504.20000000000005 Z" fill="#000"/>
<g transform="translate(143.9,422)">
<rect x="0.7" y="0.7" width="12.6" height="16.2" fill="#f4f7f4" stroke="#2f6a2f" stroke-width="1.3"/>
<path d="M3.2,4.3 L9,4.3 M3.2,9.3 L9,9.3 M3.2,14.4 L9,14.4" stroke="#3a7a3a" stroke-width="1.2"/>
<path d="M9.6,3.6 L11.4,5.6 L15.4,1 M9.6,8.6 L11.4,10.6 L15.4,6 M9.6,13.6 L11.4,15.6 L15.4,11" fill="none" stroke="#0c4d0c" stroke-width="1.7"/>
</g>
<g transform="translate(143.9,465.6)">
<rect x="0.7" y="0.7" width="12.6" height="16.2" fill="#f4f7f4" stroke="#2f6a2f" stroke-width="1.3"/>
<path d="M3.2,4.3 L9,4.3 M3.2,9.3 L9,9.3 M3.2,14.4 L9,14.4" stroke="#3a7a3a" stroke-width="1.2"/>
<path d="M9.6,3.6 L11.4,5.6 L15.4,1 M9.6,8.6 L11.4,10.6 L15.4,6 M9.6,13.6 L11.4,15.6 L15.4,11" fill="none" stroke="#0c4d0c" stroke-width="1.7"/>
</g>
<g transform="translate(143.9,509.4)">
<rect x="0.7" y="0.7" width="12.6" height="16.2" fill="#f4f7f4" stroke="#2f6a2f" stroke-width="1.3"/>
<path d="M3.2,4.3 L9,4.3 M3.2,9.3 L9,9.3 M3.2,14.4 L9,14.4" stroke="#3a7a3a" stroke-width="1.2"/>
<path d="M9.6,3.6 L11.4,5.6 L15.4,1 M9.6,8.6 L11.4,10.6 L15.4,6 M9.6,13.6 L11.4,15.6 L15.4,11" fill="none" stroke="#0c4d0c" stroke-width="1.7"/>
</g>
<g transform="translate(102.1,531.4)">
<path d="M3.6,4.2 A7.4,7.4 0 1 1 2.4,11.8" fill="none" stroke="#000" stroke-width="2.2"/>
<path d="M0.2,2.6 L6.4,2.8 L1,8.2 Z" fill="#000"/>
<path d="M9.2,5 L9.2,9.6 L13,9.6" fill="none" stroke="#000" stroke-width="1.8"/>
</g>
<path d="M1271,812.6 L1283.8,802.2 L1297.2,812.6 L1283.8,823.8 Z" fill="#e8332e"/><path d="M1283.8,802.2 L1297.2,812.6 L1295,814.4 L1287.8,808.6 L1287.8,820.6 L1283.8,823.8 Z" fill="#ffffff"/>
<text x="1200.70" y="825.40" font-size="14" fill="#ffffff" textLength="67.93" lengthAdjust="spacingAndGlyphs">AEGIS</text>
<text x="1201" y="833" font-size="4.6" font-weight="700" fill="#ffffff" textLength="85.6" lengthAdjust="spacing">SOFTWARE</text>
<text x="354.6" y="586.6" font-family="'Liberation Serif', serif" font-weight="700" font-size="14" fill="#1f2f4f">B</text><text x="377.6" y="586.6" font-family="'Liberation Serif', serif" font-weight="700" font-style="italic" font-size="14" fill="#1f2f4f">I</text><text x="400" y="585.6" font-family="'Liberation Serif', serif" font-weight="700" font-size="13.5" fill="#1f2f4f">U</text><rect x="400" y="587" width="10" height="1.1" fill="#1f2f4f"/><text x="422.6" y="586.6" font-family="'Liberation Serif', serif" font-weight="700" font-size="13.5" fill="#1f2f4f">S</text><rect x="421.6" y="581.6" width="11" height="1.1" fill="#1f2f4f"/><rect x="441" y="577" width="1" height="12" fill="#d0d0d0"/><rect x="444" y="571" width="22" height="22" fill="#95c1e5"/><rect x="448.8" y="577.0" width="12.5" height="1.2" fill="#1f2f4f"/><rect x="448.8" y="579.3" width="9" height="1.2" fill="#1f2f4f"/><rect x="448.8" y="581.6" width="12.5" height="1.2" fill="#1f2f4f"/><rect x="448.8" y="583.9" width="9" height="1.2" fill="#1f2f4f"/><rect x="448.8" y="586.2" width="12.5" height="1.2" fill="#1f2f4f"/><rect x="472.0" y="577.0" width="11" height="1.2" fill="#1f2f4f"/><rect x="474.0" y="579.3" width="7" height="1.2" fill="#1f2f4f"/><rect x="472.0" y="581.6" width="11" height="1.2" fill="#1f2f4f"/><rect x="474.0" y="583.9" width="7" height="1.2" fill="#1f2f4f"/><rect x="472.0" y="586.2" width="11" height="1.2" fill="#1f2f4f"/><rect x="495.0" y="577.0" width="12" height="1.2" fill="#1f2f4f"/><rect x="498.5" y="579.3" width="8.5" height="1.2" fill="#1f2f4f"/><rect x="495.0" y="581.6" width="12" height="1.2" fill="#1f2f4f"/><rect x="498.5" y="583.9" width="8.5" height="1.2" fill="#1f2f4f"/><rect x="495.0" y="586.2" width="12" height="1.2" fill="#1f2f4f"/><circle cx="519.1" cy="577.2" r="1.6" fill="none" stroke="#3a7bd5" stroke-width="1"/><rect x="523" y="576.6" width="8" height="1.2" fill="#1f2f4f"/><rect x="541.3" y="575.4" width="1.6" height="3.4" fill="#b01818"/><rect x="545.5" y="576.6" width="7.5" height="1.2" fill="#1f2f4f"/><circle cx="519.1" cy="582.2" r="1.6" fill="none" stroke="#3a7bd5" stroke-width="1"/><rect x="523" y="581.6" width="8" height="1.2" fill="#1f2f4f"/><rect x="541.3" y="580.4" width="1.6" height="3.4" fill="#b01818"/><rect x="545.5" y="581.6" width="7.5" height="1.2" fill="#1f2f4f"/><circle cx="519.1" cy="587.2" r="1.6" fill="none" stroke="#3a7bd5" stroke-width="1"/><rect x="523" y="586.6" width="8" height="1.2" fill="#1f2f4f"/><rect x="541.3" y="585.4" width="1.6" height="3.4" fill="#b01818"/><rect x="545.5" y="586.6" width="7.5" height="1.2" fill="#1f2f4f"/><rect x="560.3" y="577" width="1" height="12" fill="#d0d0d0"/><circle cx="573" cy="580.4" r="6.4" fill="#2f8fd0"/><path d="M568,578 Q571,575 574,577 L576,581 L572,584 Z" fill="#3fae3f"/><rect x="567.5" y="583.5" width="7" height="4.6" rx="2.3" fill="none" stroke="#555" stroke-width="1.4"/><rect x="573" y="583.5" width="7" height="4.6" rx="2.3" fill="none" stroke="#555" stroke-width="1.4"/><rect x="589.3" y="575.4" width="14.4" height="12" fill="#fff" stroke="#4a78b8" stroke-width="1"/><rect x="590.8" y="577" width="11.4" height="9" fill="#7bc04a"/><rect x="590.8" y="577" width="11.4" height="4" fill="#9fd0f0"/><circle cx="598" cy="580" r="3" fill="#f0a020"/><rect x="612.3" y="575.4" width="15.4" height="12" fill="#fff" stroke="#4a7ec0" stroke-width="1"/><rect x="612.3" y="575.4" width="15.4" height="2.6" fill="#4a7ec0"/><path d="M612.3,581 L627.7,581 M612.3,584.3 L627.7,584.3 M617.3,578 L617.3,587.4 M622.5,578 L622.5,587.4" stroke="#4a7ec0" stroke-width="1"/>
<path d="M890.5,585.5 L899.5,576.5 A2.4,2.4 0 0 1 902.9,579.9 L894.3,588.5 A1.5,1.5 0 0 1 892.2,586.4 L899.8,578.8" fill="none" stroke="#111" stroke-width="1.3"/><path d="M890.5,585.5 A2.7,2.7 0 0 0 894.3,588.5" fill="none" stroke="#111" stroke-width="1.3"/><path d="M951,577.5 L961,587 M961,577.5 L951,587" stroke="#b8b8b8" stroke-width="3"/>
<rect x="855.5" y="258.5" width="15" height="17" fill="#e5e5e5" stroke="#adadad" stroke-width="1"/><rect x="858.0" y="266" width="1.8" height="1.8" fill="#707070"/><rect x="862.1" y="266" width="1.8" height="1.8" fill="#707070"/><rect x="866.2" y="266" width="1.8" height="1.8" fill="#707070"/><rect x="822.5" y="284.5" width="14" height="19" fill="#e5e5e5" stroke="#adadad" stroke-width="1"/><path d="M826.0,292.2 L829.5,295.8 L833.0,292.2" fill="none" stroke="#606060" stroke-width="1.1"/><rect x="856.5" y="312.5" width="14" height="17" fill="#e5e5e5" stroke="#adadad" stroke-width="1"/><path d="M860.0,319.2 L863.5,322.8 L867.0,319.2" fill="none" stroke="#606060" stroke-width="1.1"/>
<circle cx="857.9" cy="294.2" r="5.5" fill="#000"/><path d="M859.22,288.86 L858.85,286.96 L856.95,286.96 L856.58,288.86 L855.83,289.11 L854.41,287.79 L852.88,288.90 L853.70,290.65 L853.23,291.30 L851.31,291.06 L850.72,292.86 L852.41,293.80 L852.41,294.60 L850.72,295.54 L851.31,297.34 L853.23,297.10 L853.70,297.75 L852.88,299.50 L854.41,300.61 L855.83,299.29 L856.58,299.54 L856.95,301.44 L858.85,301.44 L859.22,299.54 L859.97,299.29 L861.39,300.61 L862.92,299.50 L862.10,297.75 L862.57,297.10 L864.49,297.34 L865.08,295.54 L863.39,294.60 L863.39,293.80 L865.08,292.86 L864.49,291.06 L862.57,291.30 L862.10,290.65 L862.92,288.90 L861.39,287.79 L859.97,289.11 Z" fill="#000" stroke="#000" stroke-width="0.6" stroke-linejoin="round"/><circle cx="857.9" cy="294.2" r="2.4" fill="#ffffff"/>
<path d="M93,761.2 L89,765 L93,768.8" fill="none" stroke="#555" stroke-width="1.8"/>
<path d="M1281,761.2 L1285,765 L1281,768.8" fill="none" stroke="#555" stroke-width="1.8"/>
<path d="M855.5,605 L859.5,601 L863.5,605" fill="none" stroke="#b0b0b0" stroke-width="1"/>
<path d="M856.0,714.2 L859.5,717.8 L863.0,714.2" fill="none" stroke="#b0b0b0" stroke-width="1.1"/>
<path d="M359,729.1 L355,732.5 L359,735.9" fill="none" stroke="#b4b4b4" stroke-width="1.5"/>
<path d="M840,729.1 L844,732.5 L840,735.9" fill="none" stroke="#b4b4b4" stroke-width="1.5"/>
<text x="209.93" y="20.80" font-size="3" fill="#8a969e" textLength="5.37" lengthAdjust="spacingAndGlyphs">TM</text>
</svg>
</body></html>
